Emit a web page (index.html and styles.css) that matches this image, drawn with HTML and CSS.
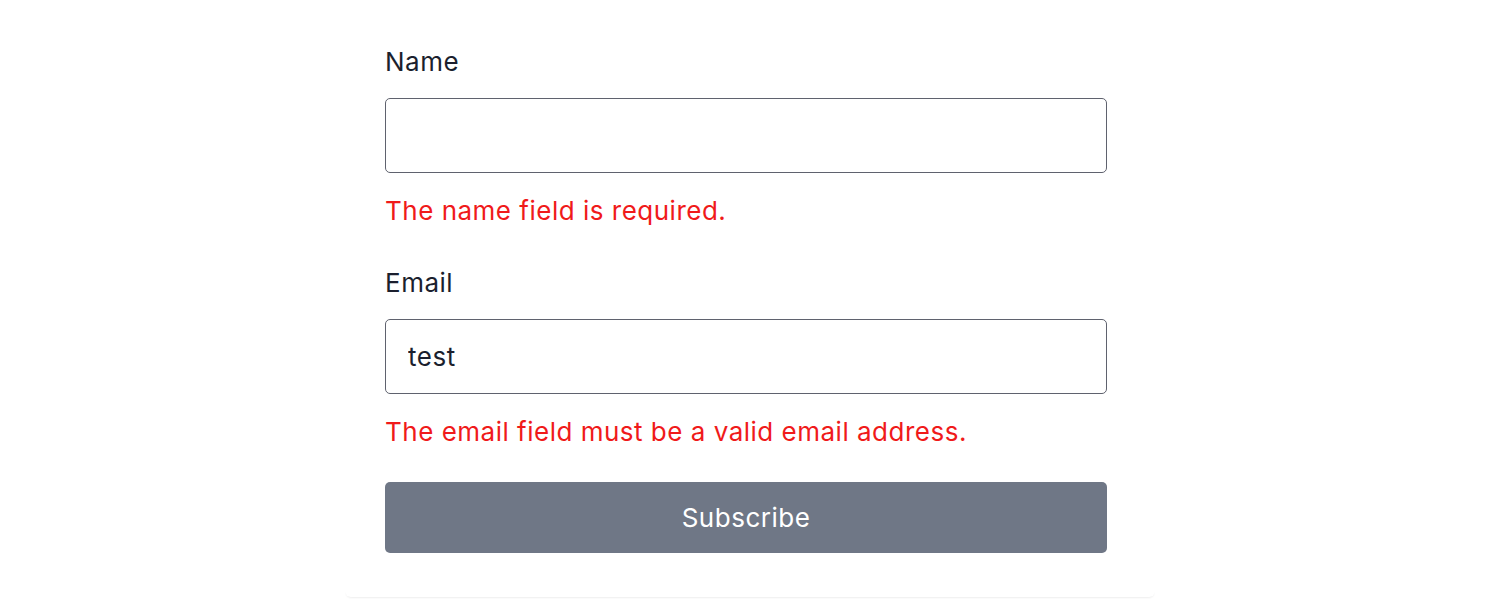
FILE: index.html
```html
<!DOCTYPE html>
<html lang="en">
<head>
<meta charset="utf-8">
<title>Subscribe</title>
<link rel="stylesheet" href="styles.css">
</head>
<body>
<div class="page">
  <form class="card">
    <div class="field">
      <label class="label" for="name">Name</label>
      <input class="input" id="name" type="text" value="">
      <p class="error">The name field is required.</p>
    </div>
    <div class="field">
      <label class="label" for="email">Email</label>
      <input class="input" id="email" type="text" value="test">
      <p class="error">The email field must be a valid email address.</p>
    </div>
    <button class="button" type="button">Subscribe</button>
  </form>
</div>
</body>
</html>
```
FILE: styles.css
```css
* { box-sizing: border-box; }
html, body { margin: 0; padding: 0; background: #ffffff; }
body {
  font-family: "Inter", "Noto Sans", sans-serif;
  color: #1b1f2e;
  height: 600px;
  overflow: hidden;
}
.page {
  display: flex;
  justify-content: center;
}
.card {
  width: 810px;
  padding: 44px 48px 44px 40px;
  background: #fff;
  box-shadow: 0 2px 2px -1px rgba(0,0,0,0.07);
  border-radius: 0 0 6px 6px;
  display: flex;
  flex-direction: column;
}
.field { display: flex; flex-direction: column; margin-bottom: 36px; }
.field:last-of-type { margin-bottom: 32px; }
.label {
  font-size: 26px;
  line-height: 36px;
  letter-spacing: 0.5px;
  color: #1b1f2e;
}
.input {
  margin-top: 18px;
  height: 75px;
  width: 100%;
  border: 1.5px solid #5f626e;
  border-radius: 5px;
  padding: 0 22px;
  font-family: inherit;
  font-size: 26px;
  letter-spacing: 0.5px;
  color: #1b1f2e;
  background: #fff;
  outline: none;
}
.error {
  margin: 20px 0 0 0;
  font-size: 26px;
  line-height: 36px;
  letter-spacing: 0.5px;
  color: #f01a1a;
}
.button {
  margin-top: 0;
  height: 71px;
  width: 100%;
  border: none;
  border-radius: 5px;
  background: #6f7786;
  color: #ffffff;
  font-family: inherit;
  font-size: 26px;
  letter-spacing: 0.5px;
}
```
